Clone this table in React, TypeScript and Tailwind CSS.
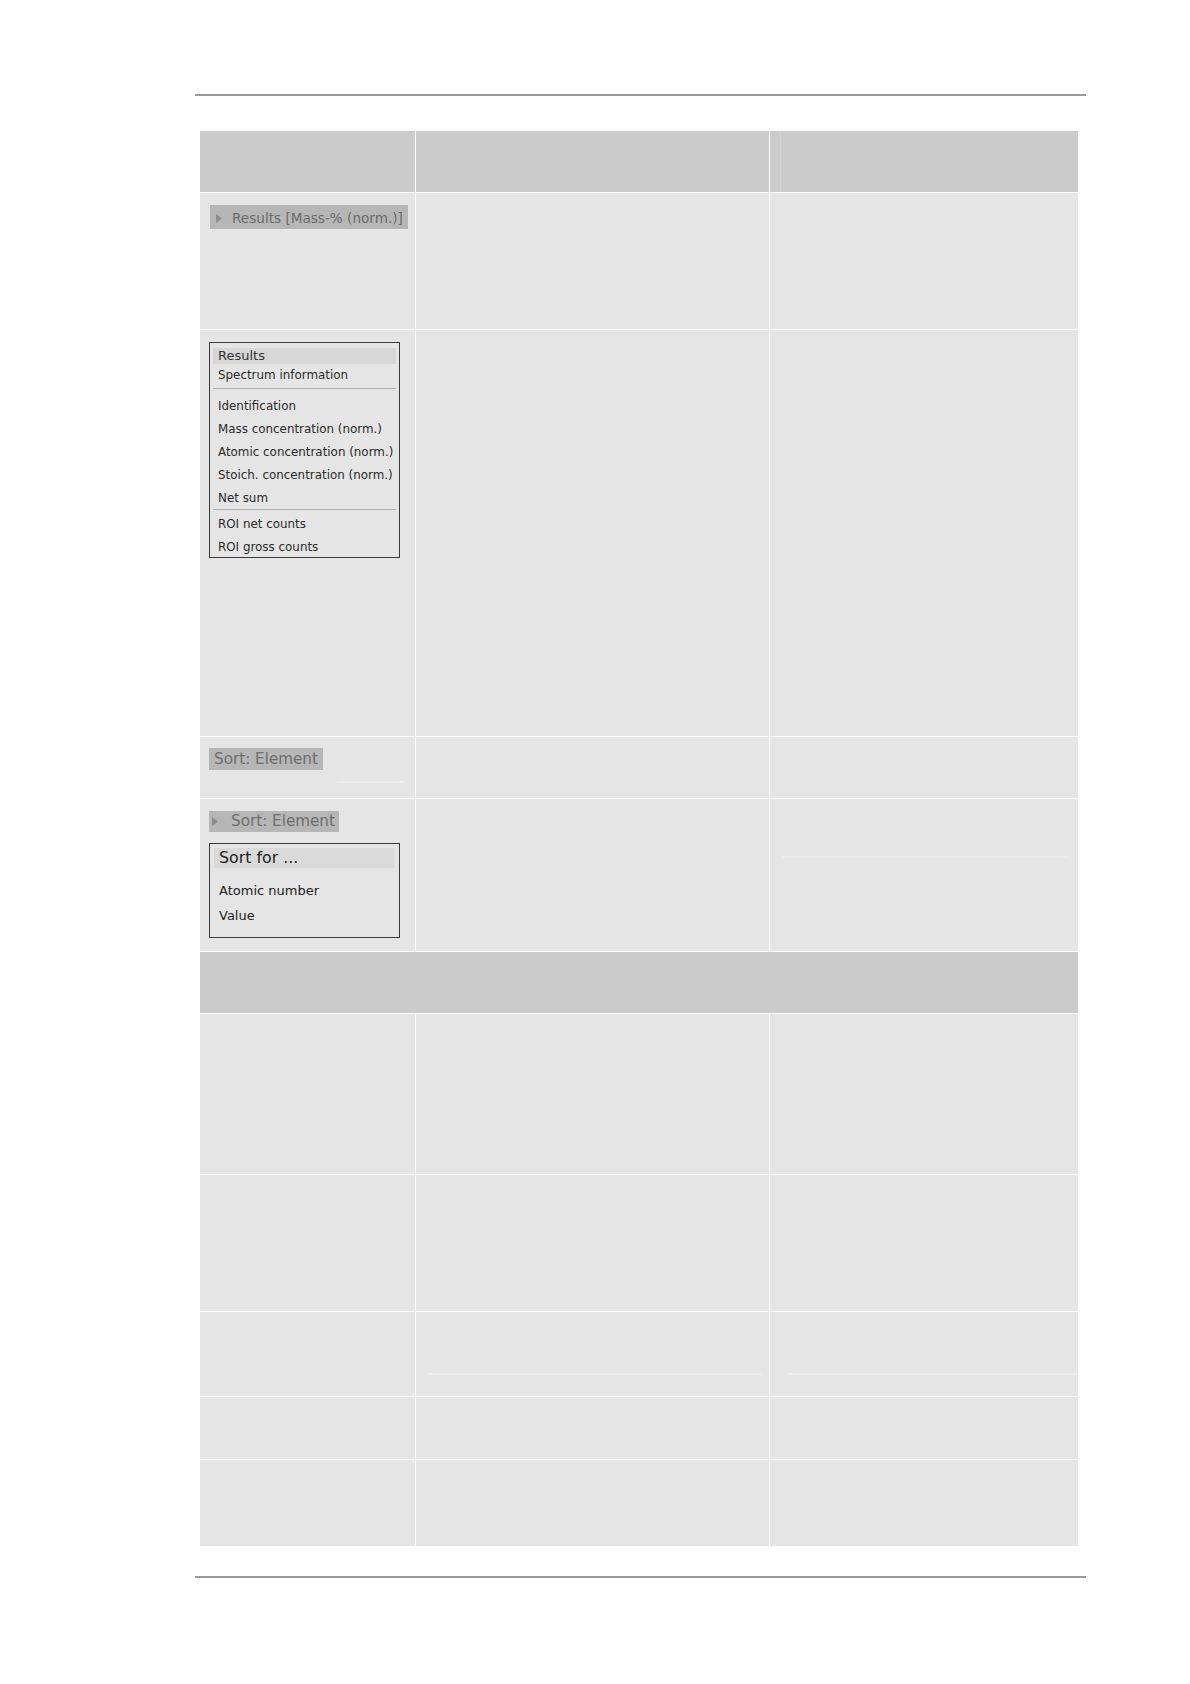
import React from 'react'

const FONT = { fontFamily: '"DejaVu Sans", "Noto Sans", sans-serif' }

// small grey "expander" triangle drawn in front of the collapsed buttons
function Caret() {
  return (
    <svg width="6" height="9" viewBox="0 0 6 9" className="shrink-0">
      <path d="M0 0 L6 4.5 L0 9 Z" fill="#8c8c8c" />
    </svg>
  )
}

function Cell({ h, children, className = '' }: { h: string; children?: React.ReactNode; className?: string }) {
  return <div className={`relative bg-[#e5e5e5] ${h} ${className}`}>{children}</div>
}

// faint leftover rule that shows through some of the empty cells
function Ghost({ className }: { className: string }) {
  return <div className={`absolute h-[2px] bg-[#ebebeb] ${className}`} />
}

function ResultsMenu() {
  const items1 = ['Identification', 'Mass concentration (norm.)', 'Atomic concentration (norm.)', 'Stoich. concentration (norm.)', 'Net sum']
  const items2 = ['ROI net counts', 'ROI gross counts']
  return (
    <div className="h-[216px] w-[191px] overflow-hidden border border-[#3a3a3a] px-[3px] pt-[5px] text-[11.9px] text-[#2a2a2a]">
      <div className="h-[16px] bg-[#d7d7d7] pl-[5px] text-[13px] leading-[16px] text-[#333]">Results</div>
      <div className="h-[22px] pl-[5px] leading-[22px]">Spectrum information</div>
      <div className="my-[2px] h-px bg-[#b0b0b0]" />
      <div className="pt-[4px]">
        {items1.map((t) => (
          <div key={t} className="h-[23px] pl-[5px] leading-[23px]">{t}</div>
        ))}
      </div>
      <div className="mt-[-1px] mb-[4px] h-px bg-[#b0b0b0]" />
      {items2.map((t) => (
        <div key={t} className="h-[23px] pl-[5px] leading-[21px]">{t}</div>
      ))}
    </div>
  )
}

function SortMenu() {
  return (
    <div className="h-[95px] w-[191px] border border-[#3a3a3a] px-[4px] pt-[4px] text-[#222]">
      <div className="h-[20px] bg-[#dadada] pl-[5px] text-[15.8px] leading-[20px]">Sort for ...</div>
      <div className="mt-[14px] pl-[5px] text-[13px] leading-[18px]">Atomic number</div>
      <div className="mt-[7px] pl-[5px] text-[13px] leading-[18px]">Value</div>
    </div>
  )
}

export default function App() {
  return (
    <div className="min-h-[1684px] w-[1190px] bg-white pt-[94px]" style={FONT}>
      <div className="ml-[195px] w-[891px]">
        <div className="h-[2px] bg-[#999999]" />

        <div className="ml-[5px] mt-[35px] grid w-[878px] grid-cols-[215px_353px_308px] gap-px bg-white">
          {/* header */}
          <div className="h-[61px] bg-[#cbcbcb]" />
          <div className="h-[61px] bg-[#cbcbcb]" />
          <div className="relative h-[61px] bg-[#cbcbcb]">
            <div className="absolute left-[10px] top-0 h-full w-px bg-[#d3d3d3]" />
          </div>

          {/* results button */}
          <Cell h="h-[136px]" className="pl-[10px] pt-[12px]">
            <div className="flex h-[24px] w-[198px] items-center gap-[10px] bg-[#b6b6b6] pl-[6px] pt-[2px] text-[13.6px] text-[#6a6a6a]">
              <Caret />
              <span>Results [Mass-% (norm.)]</span>
            </div>
          </Cell>
          <Cell h="h-[136px]" />
          <Cell h="h-[136px]" />

          {/* results menu */}
          <Cell h="h-[406px]" className="pl-[9px] pt-[12px]">
            <ResultsMenu />
          </Cell>
          <Cell h="h-[406px]" />
          <Cell h="h-[406px]" />

          {/* sort: element */}
          <Cell h="h-[61px]" className="pl-[9px] pt-[11px]">
            <div className="flex h-[22px] w-fit items-center bg-[#b6b6b6] px-[5px] text-[15.2px] text-[#6e6e6e]">Sort: Element</div>
            <Ghost className="left-[137px] top-[44px] w-[68px]" />
          </Cell>
          <Cell h="h-[61px]" />
          <Cell h="h-[61px]" />

          {/* sort: element expanded */}
          <Cell h="h-[152px]" className="pl-[9px] pt-[12px]">
            <div className="flex h-[21px] w-fit items-center gap-[13px] bg-[#b6b6b6] pl-[3px] pr-[4px] text-[15.2px] text-[#6e6e6e]">
              <Caret />
              <span>Sort: Element</span>
            </div>
            <div className="mt-[11px]">
              <SortMenu />
            </div>
          </Cell>
          <Cell h="h-[152px]" />
          <Cell h="h-[152px]">
            <Ghost className="left-[12px] top-[57px] w-[286px]" />
          </Cell>

          {/* section header */}
          <div className="col-span-3 h-[61px] bg-[#cbcbcb]" />

          <Cell h="h-[160px]" />
          <Cell h="h-[160px]" />
          <Cell h="h-[160px]" />

          <Cell h="h-[136px]" />
          <Cell h="h-[136px]" />
          <Cell h="h-[136px]" />

          <Cell h="h-[84px]" />
          <Cell h="h-[84px]">
            <Ghost className="left-[11px] top-[61px] w-[335px]" />
          </Cell>
          <Cell h="h-[84px]">
            <Ghost className="left-[18px] top-[61px] w-[290px]" />
          </Cell>

          <Cell h="h-[62px]" />
          <Cell h="h-[62px]" />
          <Cell h="h-[62px]" />

          <Cell h="h-[86px]" />
          <Cell h="h-[86px]" />
          <Cell h="h-[86px]" />
        </div>

        <div className="mt-[30px] h-[2px] bg-[#999999]" />
      </div>
    </div>
  )
}
